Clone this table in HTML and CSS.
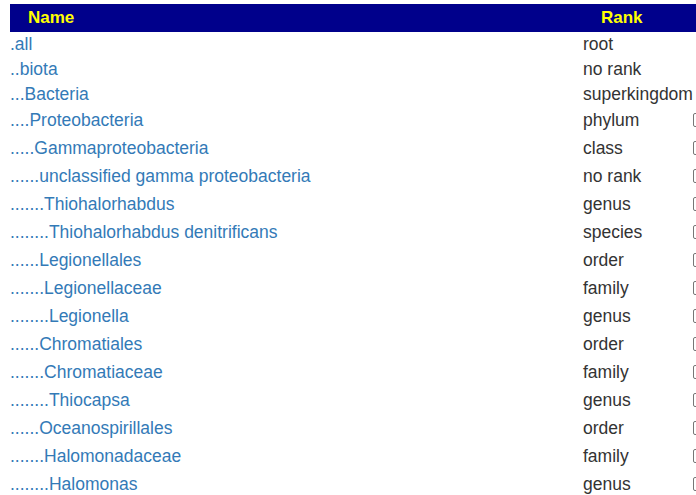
FILE: index.html
```html
<!DOCTYPE html>
<html>
<head>
<meta charset="utf-8">
<link rel="stylesheet" href="styles.css">
</head>
<body>
<table class="tax">
  <thead>
    <tr><th class="c-name">Name</th><th class="c-rank">Rank</th><th class="c-sel"></th></tr>
  </thead>
  <tbody>
    <tr class="short"><td><a href="#">.all</a></td><td>root</td><td></td></tr>
    <tr class="short"><td><a href="#">..biota</a></td><td>no rank</td><td></td></tr>
    <tr class="short"><td><a href="#">...Bacteria</a></td><td>superkingdom</td><td></td></tr>
    <tr><td><a href="#">....Proteobacteria</a></td><td>phylum</td><td><span class="box"></span></td></tr>
    <tr><td><a href="#">.....Gammaproteobacteria</a></td><td>class</td><td><span class="box"></span></td></tr>
    <tr><td><a href="#">......unclassified gamma proteobacteria</a></td><td>no rank</td><td><span class="box"></span></td></tr>
    <tr><td><a href="#">.......Thiohalorhabdus</a></td><td>genus</td><td><span class="box"></span></td></tr>
    <tr><td><a href="#">........Thiohalorhabdus denitrificans</a></td><td>species</td><td><span class="box"></span></td></tr>
    <tr><td><a href="#">......Legionellales</a></td><td>order</td><td><span class="box"></span></td></tr>
    <tr><td><a href="#">.......Legionellaceae</a></td><td>family</td><td><span class="box"></span></td></tr>
    <tr><td><a href="#">........Legionella</a></td><td>genus</td><td><span class="box"></span></td></tr>
    <tr><td><a href="#">......Chromatiales</a></td><td>order</td><td><span class="box"></span></td></tr>
    <tr><td><a href="#">.......Chromatiaceae</a></td><td>family</td><td><span class="box"></span></td></tr>
    <tr><td><a href="#">........Thiocapsa</a></td><td>genus</td><td><span class="box"></span></td></tr>
    <tr><td><a href="#">......Oceanospirillales</a></td><td>order</td><td><span class="box"></span></td></tr>
    <tr><td><a href="#">.......Halomonadaceae</a></td><td>family</td><td><span class="box"></span></td></tr>
    <tr><td><a href="#">........Halomonas</a></td><td>genus</td><td><span class="box"></span></td></tr>
  </tbody>
</table>
</body>
</html>
```
FILE: styles.css
```css
html, body {
  overflow: hidden;
}
body {
  margin: 4px 0 0 10px;
  background: #fff;
  font-family: "Liberation Sans", Arial, sans-serif;
  font-size: 17.5px;
  color: #333;
}
.tax {
  border-collapse: collapse;
  border-spacing: 0;
  table-layout: fixed;
  width: 760px;
}
.tax th {
  background: #00008b;
  color: #ffff00;
  font-weight: bold;
  font-size: 17px;
  text-align: left;
  padding: 0 0 0 18px;
  height: 28px;
}
.tax .c-name { width: 555px; }
.tax .c-rank { width: 92px; }
.tax .c-sel { width: 95px; }
.tax td {
  box-sizing: border-box;
  padding: 0 0 2px 0;
  height: 28px;
  vertical-align: middle;
  white-space: nowrap;
}
.tax tr.short td {
  height: 25px;
  padding: 0;
}
.tax a {
  color: #337ab7;
  text-decoration: none;
}
.box {
  display: block;
  width: 12px;
  height: 12px;
  border: 1px solid #767676;
  border-radius: 2px;
  margin-left: 0;
}
```
